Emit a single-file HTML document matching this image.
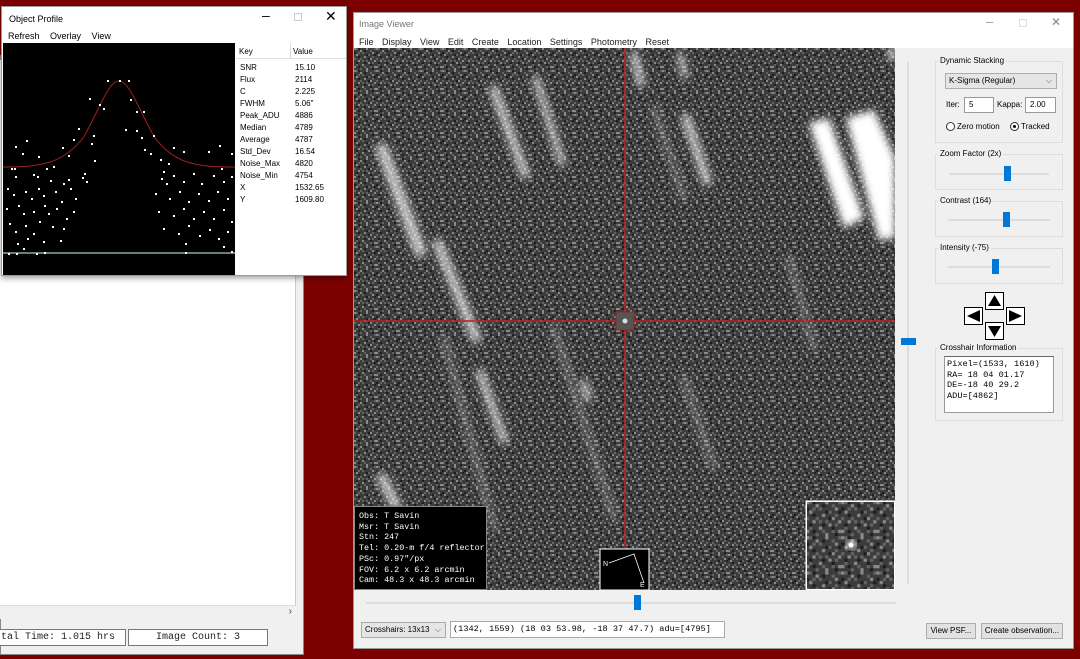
<!DOCTYPE html>
<html><head><meta charset="utf-8"><style>
*{box-sizing:border-box;margin:0;padding:0}
body{width:1080px;height:659px;background:#7d0000;position:relative;overflow:hidden;font-family:"Liberation Sans",sans-serif;font-size:9px;color:#000}
.abs{position:absolute}
.mono{font-family:"Liberation Mono",monospace}
</style></head><body>

<!-- back window -->
<div class="abs" style="left:0;top:55px;width:304px;height:600px;background:#f0f0f0;border:1px solid #888"></div>
<div class="abs" style="left:0;top:60px;width:296px;height:545px;background:#fff;border-right:1px solid #ccc"></div>
<div class="abs" style="left:0;top:605px;width:296px;height:14px;background:#f0f0f0;border-top:1px solid #ddd"><span class="abs" style="right:4px;top:0;font-size:10px;color:#444">›</span></div>
<div class="abs mono" style="left:-2px;top:629px;width:128px;height:17px;border:1px solid #777;background:#fff;font-size:10px;line-height:15px;padding-left:2px;color:#222">tal Time: 1.015 hrs</div>
<div class="abs mono" style="left:128px;top:629px;width:140px;height:17px;border:1px solid #777;background:#fff;font-size:10px;line-height:15px;text-align:center;color:#222">Image Count: 3</div>

<!-- Object Profile -->
<div class="abs" style="left:1px;top:6px;width:346px;height:270px;background:#fff;border:1px solid #999;box-shadow:0 2px 6px rgba(0,0,0,.4)">
  <div class="abs" style="left:7px;top:7px;font-size:9px">Object Profile</div>
  <div class="abs" style="left:260px;top:0;font-size:14px">–</div>
  <div class="abs" style="left:292px;top:6px;width:8px;height:8px;border:1px solid #ccc"></div>
  <div class="abs" style="left:323px;top:1px;font-size:14px">✕</div>
  <div class="abs" style="left:6px;top:24px;font-size:9px;word-spacing:8px">Refresh Overlay View</div>
  <svg class="abs" style="left:1px;top:36px" width="232" height="232">
    <rect width="232" height="232" fill="#000"/>
    <line x1="0" y1="210" x2="232" y2="210" stroke="#8fa89a" stroke-width="1.5"/>
    <path d="M0 124 C40 124,60 120,80 95 C95 70,105 38,116 38 C127 38,137 70,152 95 C172 120,190 124,232 124" fill="none" stroke="#a02020" stroke-width="1"/>
    <g fill="#fff">
      <rect x="104" y="37" width="2" height="2"/><rect x="116" y="37" width="2" height="2"/><rect x="125" y="37" width="2" height="2"/>
      <rect x="86" y="55" width="2" height="2"/><rect x="96" y="61" width="2" height="2"/><rect x="127" y="56" width="2" height="2"/><rect x="133" y="68" width="2" height="2"/><rect x="140" y="68" width="2" height="2"/>
      <rect x="100" y="65" width="2" height="2"/><rect x="90" y="92" width="2" height="2"/><rect x="122" y="86" width="2" height="2"/><rect x="133" y="87" width="2" height="2"/><rect x="138" y="94" width="2" height="2"/><rect x="150" y="92" width="2" height="2"/>
      <rect x="75" y="85" width="2" height="2"/><rect x="70" y="96" width="2" height="2"/><rect x="59" y="104" width="2" height="2"/><rect x="88" y="100" width="2" height="2"/><rect x="141" y="106" width="2" height="2"/><rect x="147" y="110" width="2" height="2"/><rect x="160" y="128" width="2" height="2"/>
      <rect x="12" y="103" width="2" height="2"/><rect x="23" y="97" width="2" height="2"/><rect x="19" y="110" width="2" height="2"/><rect x="35" y="113" width="2" height="2"/><rect x="65" y="112" width="2" height="2"/><rect x="91" y="117" width="2" height="2"/><rect x="43" y="125" width="2" height="2"/><rect x="50" y="123" width="2" height="2"/>
      <rect x="8" y="125" width="2" height="2"/><rect x="11" y="125" width="2" height="2"/><rect x="12" y="133" width="2" height="2"/><rect x="30" y="131" width="2" height="2"/><rect x="34" y="133" width="2" height="2"/><rect x="47" y="137" width="2" height="2"/><rect x="60" y="140" width="2" height="2"/><rect x="65" y="136" width="2" height="2"/><rect x="79" y="134" width="2" height="2"/><rect x="83" y="138" width="2" height="2"/><rect x="81" y="130" width="2" height="2"/>
      <rect x="4" y="145" width="2" height="2"/><rect x="10" y="151" width="2" height="2"/><rect x="22" y="148" width="2" height="2"/><rect x="28" y="155" width="2" height="2"/><rect x="35" y="145" width="2" height="2"/><rect x="40" y="152" width="2" height="2"/><rect x="52" y="148" width="2" height="2"/><rect x="58" y="158" width="2" height="2"/><rect x="67" y="145" width="2" height="2"/><rect x="72" y="155" width="2" height="2"/>
      <rect x="3" y="165" width="2" height="2"/><rect x="15" y="162" width="2" height="2"/><rect x="20" y="170" width="2" height="2"/><rect x="30" y="168" width="2" height="2"/><rect x="41" y="162" width="2" height="2"/><rect x="45" y="170" width="2" height="2"/><rect x="53" y="165" width="2" height="2"/><rect x="63" y="175" width="2" height="2"/><rect x="70" y="168" width="2" height="2"/><rect x="60" y="185" width="2" height="2"/>
      <rect x="6" y="180" width="2" height="2"/><rect x="12" y="188" width="2" height="2"/><rect x="22" y="182" width="2" height="2"/><rect x="30" y="190" width="2" height="2"/><rect x="36" y="178" width="2" height="2"/><rect x="49" y="183" width="2" height="2"/><rect x="14" y="200" width="2" height="2"/><rect x="24" y="195" width="2" height="2"/><rect x="40" y="198" width="2" height="2"/><rect x="57" y="197" width="2" height="2"/>
      <rect x="5" y="210" width="2" height="2"/><rect x="13" y="210" width="2" height="2"/><rect x="33" y="210" width="2" height="2"/><rect x="41" y="209" width="2" height="2"/><rect x="20" y="205" width="2" height="2"/>
      <rect x="170" y="104" width="2" height="2"/><rect x="180" y="108" width="2" height="2"/><rect x="205" y="108" width="2" height="2"/><rect x="216" y="102" width="2" height="2"/><rect x="228" y="110" width="2" height="2"/><rect x="157" y="116" width="2" height="2"/><rect x="165" y="120" width="2" height="2"/><rect x="218" y="125" width="2" height="2"/>
      <rect x="158" y="135" width="2" height="2"/><rect x="163" y="140" width="2" height="2"/><rect x="170" y="132" width="2" height="2"/><rect x="180" y="138" width="2" height="2"/><rect x="190" y="130" width="2" height="2"/><rect x="198" y="140" width="2" height="2"/><rect x="210" y="132" width="2" height="2"/><rect x="220" y="138" width="2" height="2"/><rect x="228" y="133" width="2" height="2"/>
      <rect x="152" y="150" width="2" height="2"/><rect x="166" y="155" width="2" height="2"/><rect x="176" y="148" width="2" height="2"/><rect x="185" y="158" width="2" height="2"/><rect x="195" y="150" width="2" height="2"/><rect x="205" y="157" width="2" height="2"/><rect x="214" y="148" width="2" height="2"/><rect x="224" y="155" width="2" height="2"/>
      <rect x="155" y="168" width="2" height="2"/><rect x="170" y="172" width="2" height="2"/><rect x="180" y="165" width="2" height="2"/><rect x="190" y="175" width="2" height="2"/><rect x="200" y="168" width="2" height="2"/><rect x="210" y="175" width="2" height="2"/><rect x="220" y="166" width="2" height="2"/><rect x="228" y="178" width="2" height="2"/>
      <rect x="160" y="185" width="2" height="2"/><rect x="175" y="190" width="2" height="2"/><rect x="185" y="182" width="2" height="2"/><rect x="196" y="192" width="2" height="2"/><rect x="206" y="186" width="2" height="2"/><rect x="215" y="195" width="2" height="2"/><rect x="224" y="188" width="2" height="2"/><rect x="182" y="200" width="2" height="2"/><rect x="220" y="203" width="2" height="2"/><rect x="182" y="209" width="2" height="2"/><rect x="228" y="208" width="2" height="2"/>
    </g>
  </svg>
  <div class="abs" style="left:234px;top:36px;width:110px;height:232px;font-size:8px;overflow:hidden">
    <div style="height:16px;border-bottom:1px solid #ddd;background:#fff;position:relative">
      <span class="abs" style="left:3px;top:4px">Key</span>
      <span class="abs" style="left:54px;top:0;height:16px;border-left:1px solid #ddd"></span>
      <span class="abs" style="left:57px;top:4px">Value</span>
    </div>
    <div style="line-height:12px;padding-top:3px;position:relative">
      <div style="padding-left:4px">SNR<br>Flux<br>C<br>FWHM<br>Peak_ADU<br>Median<br>Average<br>Std_Dev<br>Noise_Max<br>Noise_Min<br>X<br>Y</div>
      <div class="abs" style="left:59px;top:3px">15.10<br>2114<br>2.225<br>5.06"<br>4886<br>4789<br>4787<br>16.54<br>4820<br>4754<br>1532.65<br>1609.80</div>
    </div>
  </div>
</div>

<!-- Image Viewer -->
<div class="abs" style="left:353px;top:12px;width:721px;height:637px;background:#f0f0f0;border:1px solid #999">
  <div class="abs" style="left:0;top:0;width:719px;height:35px;background:#fff"></div>
  <div class="abs" style="left:5px;top:6px;font-size:9px;color:#777">Image Viewer</div>
  <div class="abs" style="left:632px;top:1px;font-size:13px;color:#999">–</div>
  <div class="abs" style="left:665px;top:6px;width:8px;height:8px;border:1px solid #ddd"></div>
  <div class="abs" style="left:697px;top:2px;font-size:12px;color:#888">✕</div>
  <div class="abs" style="left:5px;top:24px;font-size:9px;word-spacing:6px;color:#222">File Display View Edit Create Location Settings Photometry Reset</div>
</div>

<svg class="abs" style="left:354px;top:48px" width="541" height="542">
  <defs>
    <pattern id="p" width="22" height="22" patternUnits="userSpaceOnUse">
      <rect width="22" height="22" fill="#3c3c3c"/>
      <g fill="#8a8a8a">
        <rect x="0" y="0" width="2" height="2"/><rect x="6" y="2" width="2" height="2"/><rect x="12" y="0" width="2" height="2"/><rect x="18" y="4" width="2" height="2"/>
        <rect x="2" y="6" width="2" height="2"/><rect x="10" y="8" width="2" height="2"/><rect x="16" y="10" width="2" height="2"/><rect x="4" y="12" width="2" height="2"/>
        <rect x="8" y="16" width="2" height="2"/><rect x="14" y="14" width="2" height="2"/><rect x="20" y="18" width="2" height="2"/><rect x="0" y="18" width="2" height="2"/>
        <rect x="12" y="20" width="2" height="2"/><rect x="20" y="12" width="2" height="2"/>
      </g>
      <g fill="#636363">
        <rect x="2" y="0" width="2" height="2"/><rect x="8" y="4" width="2" height="2"/><rect x="14" y="6" width="2" height="2"/><rect x="20" y="0" width="2" height="2"/>
        <rect x="0" y="10" width="2" height="2"/><rect x="6" y="10" width="2" height="2"/><rect x="12" y="12" width="2" height="2"/><rect x="18" y="8" width="2" height="2"/>
        <rect x="2" y="16" width="2" height="2"/><rect x="10" y="18" width="2" height="2"/><rect x="16" y="18" width="2" height="2"/><rect x="6" y="20" width="2" height="2"/>
        <rect x="4" y="4" width="2" height="2"/><rect x="16" y="2" width="2" height="2"/><rect x="18" y="14" width="2" height="2"/><rect x="8" y="12" width="2" height="2"/>
      </g>
      <g fill="#1e1e1e">
        <rect x="4" y="0" width="2" height="2"/><rect x="10" y="2" width="2" height="2"/><rect x="0" y="4" width="2" height="2"/><rect x="12" y="6" width="2" height="2"/>
        <rect x="4" y="8" width="2" height="2"/><rect x="20" y="6" width="2" height="2"/><rect x="14" y="10" width="2" height="2"/><rect x="2" y="14" width="2" height="2"/>
        <rect x="10" y="14" width="2" height="2"/><rect x="16" y="16" width="2" height="2"/><rect x="4" y="18" width="2" height="2"/><rect x="18" y="20" width="2" height="2"/>
      </g>
    </pattern>
    <filter id="b"><feGaussianBlur stdDeviation="4"/></filter>
  </defs>
  <rect width="541" height="542" fill="url(#p)"/>
  <g stroke="#fff" stroke-linecap="round" filter="url(#b)" opacity="0.7">
    <line x1="140" y1="42" x2="171" y2="126" stroke-width="9"/>
    <line x1="182" y1="31" x2="208" y2="115" stroke-width="7"/>
    <line x1="28" y1="101" x2="66" y2="203" stroke-width="12"/>
    <line x1="84" y1="196" x2="122" y2="290" stroke-width="10"/>
    <line x1="126" y1="325" x2="150" y2="392" stroke-width="8"/>
    <line x1="280" y1="7" x2="287" y2="35" stroke-width="8"/>
    <line x1="326" y1="7" x2="331" y2="28" stroke-width="6"/>
    <line x1="332" y1="70" x2="353" y2="133" stroke-width="9"/>
    <line x1="28" y1="430" x2="42" y2="458" stroke-width="10"/>
    <line x1="230" y1="335" x2="234" y2="350" stroke-width="7"/>
  </g>
  <g stroke="#fff" stroke-linecap="round" filter="url(#b)" opacity="0.3">
    <line x1="435" y1="210" x2="460" y2="300" stroke-width="6"/>
    <line x1="90" y1="290" x2="140" y2="480" stroke-width="6"/>
    <line x1="200" y1="280" x2="260" y2="470" stroke-width="6"/>
    <line x1="330" y1="330" x2="360" y2="420" stroke-width="6"/>
    <line x1="300" y1="60" x2="330" y2="150" stroke-width="6"/>
  </g>
  <g fill="#fff" filter="url(#b)">
    <polygon points="455,75 475,70 510,170 490,180"/>
    <polygon points="492,70 520,62 541,110 541,190 525,192"/>
    <rect x="535" y="0" width="6" height="12"/>
  </g>
  <line x1="271" y1="0" x2="271" y2="500" stroke="#c02020" stroke-width="1.5"/>
  <line x1="0" y1="273" x2="541" y2="273" stroke="#c02020" stroke-width="1.5"/>
  <rect x="262" y="264" width="18" height="18" fill="#555" stroke="#a02020"/>
  <circle cx="271" cy="273" r="2.5" fill="#ddd"/>
  <rect x="246" y="501" width="49" height="41" fill="#000" stroke="#fff" stroke-width="1"/>
  <polyline points="255,515 280,506 290,535" fill="none" stroke="#fff" stroke-width="0.8"/>
  <text x="249" y="518" fill="#fff" font-size="7" font-family="Liberation Sans">N</text>
  <text x="286" y="539" fill="#fff" font-size="7" font-family="Liberation Sans">E</text>
  <rect x="452" y="453" width="89" height="89" fill="url(#p)" stroke="#fff" transform="translate(452 453) scale(1) translate(-452 -453)"/>
  <g transform="translate(452 453) scale(1.6)"><rect width="55" height="55" fill="url(#p)"/></g>
  <rect x="452.5" y="453.5" width="88" height="88" fill="none" stroke="#fff"/>
  <circle cx="497" cy="497" r="5" fill="#eee" filter="url(#b)"/>
  <circle cx="497" cy="497" r="2.5" fill="#fff"/>
</svg>
<div class="abs mono" style="left:354px;top:506px;width:133px;height:84px;background:#000;color:#fff;border:1px solid #888;font-size:8.4px;line-height:10.7px;padding:4px 0 0 4px;white-space:pre">Obs: T Savin
Msr: T Savin
Stn: 247
Tel: 0.20-m f/4 reflector
PSc: 0.97"/px
FOV: 6.2 x 6.2 arcmin
Cam: 48.3 x 48.3 arcmin</div>

<!-- vertical slider -->
<div class="abs" style="left:907px;top:62px;width:2px;height:522px;background:#ddd"></div>
<div class="abs" style="left:901px;top:338px;width:15px;height:7px;background:#0078d7"></div>
<!-- horizontal slider -->
<div class="abs" style="left:366px;top:602px;width:530px;height:2px;background:#ddd"></div>
<div class="abs" style="left:634px;top:595px;width:7px;height:15px;background:#0078d7"></div>

<!-- bottom controls -->
<div class="abs" style="left:361px;top:622px;width:85px;height:16px;background:#e5e5e5;border:1px solid #aaa;font-size:8px;line-height:14px;padding-left:3px">Crosshairs: 13x13<span style="position:absolute;right:4px;color:#555">⌵</span></div>
<div class="abs mono" style="left:450px;top:621px;width:275px;height:17px;background:#fff;border:1px solid #aaa;font-size:8.6px;line-height:15px;padding-left:2px">(1342, 1559) (18 03 53.98, -18 37 47.7) adu=[4795]</div>
<div class="abs" style="left:926px;top:623px;width:50px;height:16px;background:#e1e1e1;border:1px solid #adadad;font-size:8px;line-height:14px;text-align:center">View PSF...</div>
<div class="abs" style="left:981px;top:623px;width:82px;height:16px;background:#e1e1e1;border:1px solid #adadad;font-size:8px;line-height:14px;text-align:center">Create observation...</div>

<!-- right panel -->
<div class="abs" style="left:935px;top:61px;width:128px;height:82px;border:1px solid #ddd"></div>
<div class="abs" style="left:938px;top:56px;background:#f0f0f0;padding:0 2px;font-size:8px">Dynamic Stacking</div>
<div class="abs" style="left:945px;top:73px;width:112px;height:16px;background:#e5e5e5;border:1px solid #adadad;font-size:8px;line-height:14px;padding-left:3px">K-Sigma (Regular)<span style="position:absolute;right:4px;color:#555">⌵</span></div>
<div class="abs" style="left:946px;top:100px;font-size:8px">Iter:</div>
<div class="abs" style="left:964px;top:97px;width:30px;height:16px;background:#fff;border:1px solid #999;font-size:8px;padding:2px 4px">5</div>
<div class="abs" style="left:997px;top:100px;font-size:8px">Kappa:</div>
<div class="abs" style="left:1025px;top:97px;width:31px;height:16px;background:#fff;border:1px solid #999;font-size:8px;padding:2px 4px">2.00</div>
<div class="abs" style="left:946px;top:122px;width:9px;height:9px;border:1px solid #333;border-radius:50%;background:#fff"></div>
<div class="abs" style="left:957px;top:122px;font-size:8px">Zero motion</div>
<div class="abs" style="left:1010px;top:122px;width:9px;height:9px;border:1px solid #333;border-radius:50%;background:#fff"><div style="margin:2px;width:3px;height:3px;border-radius:50%;background:#000"></div></div>
<div class="abs" style="left:1021px;top:122px;font-size:8px">Tracked</div>

<div class="abs" style="left:935px;top:154px;width:128px;height:36px;border:1px solid #ddd"></div>
<div class="abs" style="left:938px;top:149px;background:#f0f0f0;padding:0 2px;font-size:8px">Zoom Factor (2x)</div>
<div class="abs" style="left:949px;top:173px;width:100px;height:2px;background:#ddd"></div>
<div class="abs" style="left:1004px;top:166px;width:7px;height:15px;background:#0078d7"></div>

<div class="abs" style="left:935px;top:201px;width:128px;height:36px;border:1px solid #ddd"></div>
<div class="abs" style="left:938px;top:196px;background:#f0f0f0;padding:0 2px;font-size:8px">Contrast (164)</div>
<div class="abs" style="left:948px;top:219px;width:102px;height:2px;background:#ddd"></div>
<div class="abs" style="left:1003px;top:212px;width:7px;height:15px;background:#0078d7"></div>

<div class="abs" style="left:935px;top:248px;width:128px;height:36px;border:1px solid #ddd"></div>
<div class="abs" style="left:938px;top:243px;background:#f0f0f0;padding:0 2px;font-size:8px">Intensity (-75)</div>
<div class="abs" style="left:948px;top:266px;width:102px;height:2px;background:#ddd"></div>
<div class="abs" style="left:992px;top:259px;width:7px;height:15px;background:#0078d7"></div>

<svg class="abs" style="left:964px;top:292px" width="62" height="48">
  <g fill="#fff" stroke="#000" stroke-width="1">
    <rect x="21.5" y="0.5" width="18" height="17"/><rect x="0.5" y="15.5" width="18" height="17"/>
    <rect x="42.5" y="15.5" width="18" height="17"/><rect x="21.5" y="30.5" width="18" height="17"/>
  </g>
  <g fill="#000">
    <polygon points="30.5,3 37,14 24,14"/><polygon points="3,24 16,18 16,30"/>
    <polygon points="58,24 45,18 45,30"/><polygon points="30.5,45 37,34 24,34"/>
  </g>
</svg>

<div class="abs" style="left:935px;top:348px;width:128px;height:73px;border:1px solid #ddd"></div>
<div class="abs" style="left:938px;top:343px;background:#f0f0f0;padding:0 2px;font-size:8px">Crosshair Information</div>
<div class="abs mono" style="left:944px;top:356px;width:110px;height:57px;background:#fff;border:1px solid #999;border-top-color:#666;font-size:8.6px;line-height:10.5px;padding:2px 2px;white-space:pre">Pixel=(1533, 1610)
RA= 18 04 01.17
DE=-18 40 29.2
ADU=[4862]</div>

</body></html>
